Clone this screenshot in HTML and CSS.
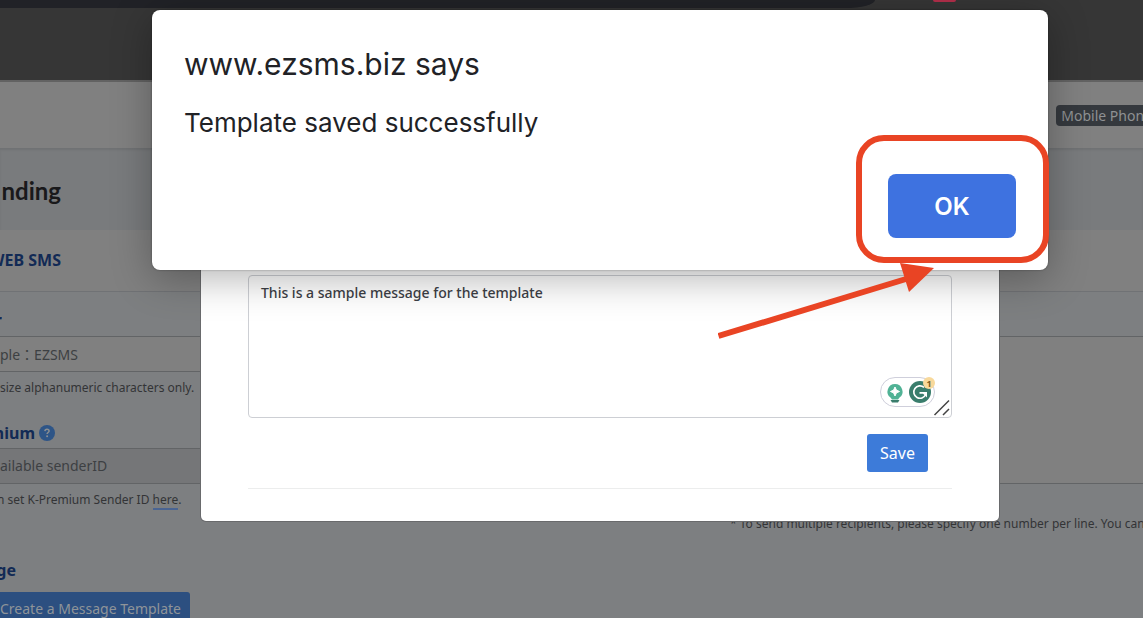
FILE: index.html
```html
<!DOCTYPE html>
<html lang="en">
<head>
<meta charset="utf-8">
<title>EZSMS</title>
<link rel="stylesheet" href="styles.css">
</head>
<body>
<div class="page">
  <div class="chrome">
    <div class="chrome-tab"></div>
    <div class="chrome-mark"></div>
  </div>
  <nav class="nav"><span class="badge">Mobile Phone</span></nav>
  <header class="title-band"><h1 class="clip clip-title">nding</h1></header>
  <div class="tabs"><a class="tab clip clip-tab" href="#web">WEB SMS</a></div>
  <main class="form">
    <section class="column">
      <label class="label clip clip-sender" for="sender">r</label>
      <input class="field" id="sender" type="text" lang="zh-Hant" placeholder="ple：EZSMS">
      <p class="hint">size alphanumeric characters only.</p>
      <div class="label-row">
        <label class="label clip clip-premium" for="premium">mium</label>
        <svg class="help" viewBox="0 0 16 16" aria-hidden="true"><circle cx="8" cy="8" r="8" fill="#2e5587"/><path d="M5.9 6.1C6 4.8 6.9 4.2 8 4.2c1.200 0 2.100.700 2.100 1.800 0 1.500-2 1.500-2 3" fill="none" stroke="#8b8e91" stroke-width="1.500"/><circle cx="8.100" cy="11.300" r="1" fill="#8b8e91"/></svg>
      </div>
      <select class="field field-select" id="premium"><option>ailable senderID</option></select>
      <p class="hint hint-premium">n set K-Premium Sender ID <a class="link" href="#here">here</a>.</p>
      <h2 class="label label-message clip clip-message">ge</h2>
      <button class="create" type="button">Create a Message Template</button>
    </section>
    <section class="column column-right">
      <textarea class="recipients" aria-label="Recipients"></textarea>
      <p class="hint">* To send multiple recipients, please specify one number per line. You can</p>
    </section>
  </main>
</div>

<div class="layer">
  <section class="modal">
    <div class="message-box">
      <textarea class="message" aria-label="Message">This is a sample message for the template</textarea>
      <svg class="assist" viewBox="0 0 72 42" aria-hidden="true">
        <rect x=".5" y="2.500" width="54" height="29" rx="14.500" fill="#fff" stroke="#cfcfdb"/>
        <path d="M15 9a7.500 7.500 0 0 0-4.500 13.500L12 24.500h6l1.500-2A7.500 7.500 0 0 0 15 9z" fill="#50b295"/>
        <path d="M15 12l1.400 3.100 3.100 1.400-3.100 1.400L15 21l-1.400-3.100-3.100-1.400 3.100-1.400z" fill="#fff" stroke="#fff"/>
        <path d="M10.500 25h9l-1.500 2.500h-6z" fill="#397d6c"/>
        <circle cx="40" cy="17" r="11" fill="#397d6c"/>
        <path d="M44 12.300A6.200 6.200 0 1 0 45.700 19.500" fill="none" stroke="#fff" stroke-width="1.600"/>
        <path d="M39.500 17h7.500v5.500l-2.200-2.200-1.800-1.500h-3.500z" fill="#fff"/>
        <circle cx="49" cy="8" r="6" fill="#f8d99b"/>
        <text x="49" y="11.500" class="assist-count">1</text>
        <path d="M54.500 40L69 25.500M63 40l6-6" stroke="#444" stroke-width="1.500"/>
      </svg>
    </div>
    <div class="actions"><button class="save" type="button">Save</button></div>
    <hr class="rule">
  </section>
</div>

<div class="layer">
  <section class="alert" role="alertdialog" aria-labelledby="alert-title">
    <h2 class="alert-title" id="alert-title">www.ezsms.biz says</h2>
    <p class="alert-text">Template saved successfully</p>
    <div class="alert-actions"><button class="ok" type="button">OK</button></div>
    <svg class="callout" viewBox="0 0 334 208" aria-hidden="true">
      <rect x="141" y="3" width="187" height="122" rx="25" fill="none" stroke="#e94424" stroke-width="6"/>
      <path d="M.5 201L188 144" stroke="#e94424" stroke-width="6"/>
      <path d="M182 128l34 5-25 24z" fill="#e94424"/>
    </svg>
  </section>
</div>
</body>
</html>
```
FILE: styles.css
```css
* { box-sizing: border-box; }

body {
  margin: 0;
  overflow: hidden;
  font-family: "Noto Sans", "Noto Sans CJK TC", sans-serif;
  font-size: 14px;
  color: #333436;
  background: #7d7f81;
}

h1, h2, p { margin: 0; }
button { font-family: inherit; cursor: pointer; }

.page { height: 100vh; overflow: hidden; }

.chrome {
  display: flex;
  gap: 58px;
  height: 82px;
  background: #363636;
  border-bottom: 2px solid #626262;
}
.chrome-tab {
  width: 875px;
  height: 8px;
  background: #212227;
  border-bottom-right-radius: 30px 8px;
}
.chrome-mark {
  width: 23px;
  height: 2px;
  background: #b32f4b;
  border-radius: 0 0 3px 3px;
}

.nav {
  display: flex;
  align-items: center;
  justify-content: flex-end;
  height: 66px;
  background: #808080;
}
.badge {
  margin-right: -14px;
  padding: 0 5px;
  line-height: 21px;
  border-radius: 4px;
  background: #35393e;
  color: #8f9193;
}

.title-band {
  display: flex;
  align-items: center;
  height: 82px;
  padding-top: 4px;
  background: #797b7d;
  box-shadow: inset 0 2px 2px #707274;
}
.title-band h1 {
  font: bold 24px/32px Lato, sans-serif;
  color: #19191b;
}

/* Labels that run off the left edge of the window */
.clip {
  display: flex;
  justify-content: flex-end;
  overflow: hidden;
  white-space: nowrap;
}
.clip-title { width: 61px; }
.clip-tab { width: 61px; }
.clip-sender { width: 2px; }
.clip-premium { width: 35px; }
.clip-message { width: 16px; }

.tabs {
  display: flex;
  align-items: center;
  height: 62px;
  padding-bottom: 2px;
  background: #808080;
  border-bottom: 1px solid #707275;
}
.tab {
  font-size: 16px;
  font-weight: bold;
  color: #122a55;
  text-decoration: none;
}

.form {
  display: grid;
  grid-template-columns: 360px 1fr;
  column-gap: 370px;
  padding-top: 16px;
}
.column { min-width: 0; }
.column-right { padding-top: 28px; }

.label {
  font-size: 16px;
  line-height: 24px;
  font-weight: bold;
  color: #122a55;
}
.label-row {
  display: flex;
  align-items: center;
  gap: 4px;
  margin-top: 23px;
}
.help { width: 16px; height: 16px; }

.field {
  display: block;
  width: 100%;
  height: 36px;
  margin: 4px 0 0;
  padding: 0;
  border: solid #626466;
  border-width: 1px 0;
  border-radius: 0;
  background: #808080;
  color: #3d4043;
  font: inherit;
}
.field::placeholder { color: #3d4043; opacity: 1; }
.field-select {
  margin-top: 3px;
  padding-bottom: 2px;
  appearance: none;
  background: #757678;
}

.hint {
  margin-top: 6px;
  font-size: 12px;
  line-height: 20px;
  white-space: nowrap;
}
.hint-premium { margin-left: -3px; }
.link {
  color: inherit;
  text-decoration: none;
  border-bottom: 2px solid #4a6492;
}

.label-message { margin-top: 48px; }
.create {
  margin-top: 10px;
  height: 32px;
  padding: 0 9px 0 0;
  border: 0;
  border-radius: 0 3px 3px 0;
  background: #2c4f80;
  color: #8f9499;
  font-size: 14px;
}

.recipients {
  display: block;
  width: 100%;
  height: 148px;
  margin: 0 0 30px;
  border: solid #626466;
  border-width: 1px 0;
  background: #808080;
  resize: none;
}

.layer {
  position: absolute;
  inset: 0 0 auto;
  display: flex;
  justify-content: center;
  padding-left: 57px;
}

.modal {
  width: 798px;
  margin-top: 100px;
  padding: 175px 47px 32px;
  border-radius: 5px;
  background: #fff;
  box-shadow: 0 0 0 1px #696a6c;
}
.message-box { position: relative; }
.message {
  display: block;
  width: 100%;
  height: 143px;
  padding: 7px 12px;
  border: 1px solid #cdcfd4;
  border-radius: 4px;
  background: #fff;
  color: #3d4046;
  font: 500 14px/20px "Noto Sans", sans-serif;
  resize: none;
}
.assist {
  position: absolute;
  right: 0;
  bottom: 1px;
  width: 72px;
  height: 42px;
}
.assist-count {
  font: bold 9px "Noto Sans", sans-serif;
  text-anchor: middle;
  fill: #7c5b1d;
}
.actions {
  display: flex;
  justify-content: flex-end;
  padding: 16px 24px;
}
.save {
  height: 38px;
  padding: 0 13px;
  border: 0;
  border-radius: 3px;
  background: #3d7bd9;
  color: #fff;
  font-size: 16px;
}
.rule {
  height: 1px;
  margin: 0;
  border: 0;
  background: #eceded;
}

.alert {
  position: relative;
  width: 896px;
  margin-top: 10px;
  padding: 34px 32px 32px;
  border-radius: 8px;
  background: #fff;
  box-shadow: 0 0 2px rgba(0, 0, 0, .4), 0 8px 40px rgba(0, 0, 0, .3);
  color: #212226;
  font-family: Inter, sans-serif;
}
.alert-title { font-size: 30px; line-height: 40px; font-weight: 400; }
.alert-text { margin-top: 22px; font-size: 26px; line-height: 34px; }
.alert-actions {
  display: flex;
  justify-content: flex-end;
  margin-top: 34px;
}
.ok {
  width: 128px;
  height: 64px;
  border: 0;
  border-radius: 8px;
  background: #3e72e0;
  color: #fff;
  font-size: 24px;
  font-weight: 600;
}
.callout {
  position: absolute;
  right: -4px;
  top: 125px;
  width: 334px;
  height: 208px;
  pointer-events: none;
}
```
